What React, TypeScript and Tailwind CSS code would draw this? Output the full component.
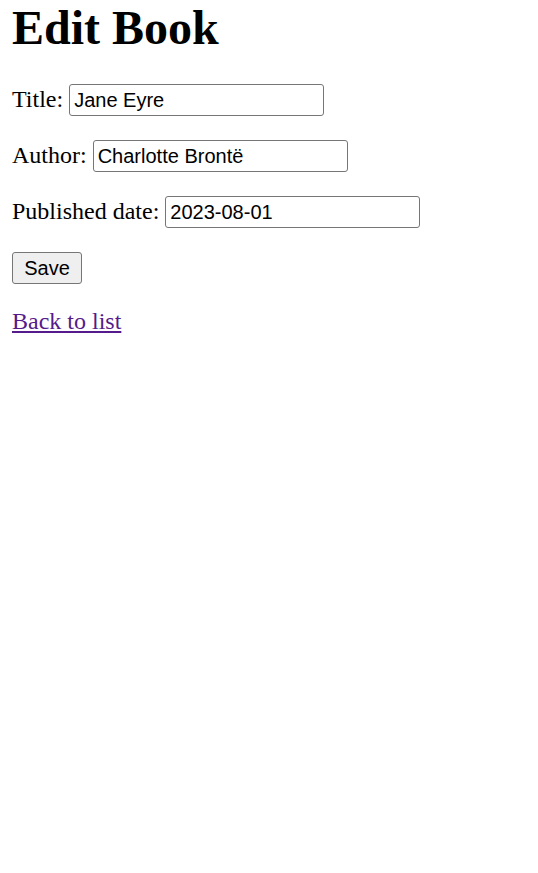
import React from "react";

const inputCls =
  "box-border h-[32px] w-[255px] rounded-[3px] border border-[#767676] bg-white px-[4px] py-[1px] align-baseline text-[20px] text-black outline-none [font-family:'Liberation_Sans',Arial,sans-serif]";

export default function App() {
  return (
    <div className="min-h-[873px] bg-white px-[12px] text-black [font-family:'Liberation_Serif','Times_New_Roman',serif]">
      <h1 className="m-0 text-[48px] font-bold leading-[55px]">Edit Book</h1>
      <form onSubmit={(e) => e.preventDefault()} className="text-[24px] leading-[normal]">
        <p className="mb-[24px] mt-[29px]">
          <label>
            Title: <input className={inputCls} defaultValue="Jane Eyre" />
          </label>
        </p>
        <p className="my-[24px]">
          <label>
            Author: <input className={inputCls} defaultValue="Charlotte Brontë" />
          </label>
        </p>
        <p className="my-[24px]">
          <label>
            Published date: <input className={inputCls} defaultValue="2023-08-01" />
          </label>
        </p>
        <p className="mb-[24px] mt-[24px]">
          <button
            type="submit"
            className="box-border h-[32px] w-[70px] rounded-[3px] border border-[#767676] bg-[#efefef] px-[9px] py-[1px] align-baseline text-[20px] text-black [font-family:'Liberation_Sans',Arial,sans-serif]"
          >
            Save
          </button>
        </p>
      </form>
      <div className="text-[24px] leading-[normal]">
        <a href="#" className="text-[#551a8b] underline">
          Back to list
        </a>
      </div>
    </div>
  );
}
